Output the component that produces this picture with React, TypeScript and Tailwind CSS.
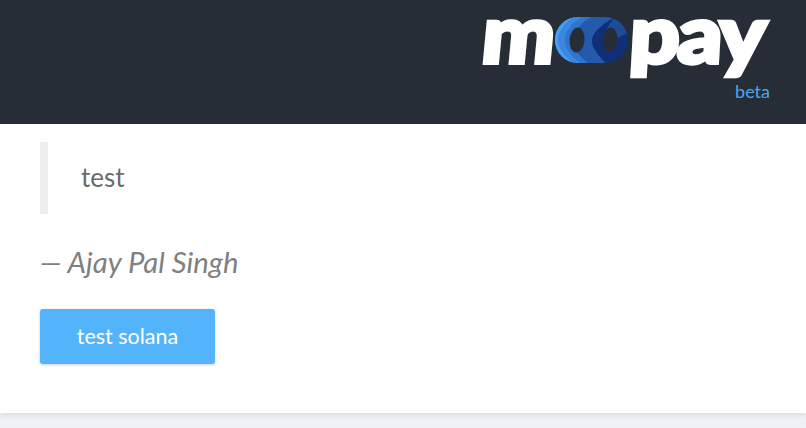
const bodyFont = { fontFamily: '"Lato", "Noto Sans", sans-serif' };

function LogoMark() {
  return (
    <svg width="73" height="46" viewBox="0 0 73 46" className="mt-4 block shrink-0">
      <defs>
        <clipPath id="pill">
          <rect x="0" y="0" width="73" height="46" rx="23" />
        </clipPath>
      </defs>
      <g clipPath="url(#pill)">
        <rect width="73" height="46" fill="#0f2f78" />
        <path d="M0 0H73V16C64 20 56 24 50 30C44 22 52 10 60 0Z" fill="#1d4c9c" />
        <path d="M0 0H60C50 6 37 14 37 24C37 32 44 38 50 46H0Z" fill="#2459ac" />
        <path d="M0 0H36C26 6 18 14 18 23C18 32 26 40 33 46H0Z" fill="#2f74cd" />
        <path d="M0 0H27C17 6 10 14 10 23C10 32 17 40 26 46H0Z" fill="#3a86e0" />
        <path d="M0 0H19C10 6 3 14 3 23C3 32 10 40 19 46H0Z" fill="#479ef2" />
      </g>
      <ellipse cx="22" cy="23" rx="7.5" ry="12.5" fill="#262d37" transform="rotate(5 22 23)" />
      <ellipse cx="55" cy="23" rx="7.5" ry="12.5" fill="#262d37" transform="rotate(5 55 23)" />
    </svg>
  );
}

export default function App() {
  return (
    <div className="min-h-[428px] overflow-hidden bg-[#f0f1f5]" style={bodyFont}>
      <header className="relative flex h-[124px] justify-end bg-[#262d37] pr-[36px]">
        <div className="flex items-start pt-px">
          <span className="w-[72px] origin-left scale-x-[1.08] -skew-x-[5deg] text-[80px] leading-[62px] font-black text-white [-webkit-text-stroke:4px_white]">
            m
          </span>
          <LogoMark />
          <span className="ml-[2px] w-[140px] origin-left scale-x-[1.1] -skew-x-[3deg] text-[80px] leading-[62px] font-black tracking-[-2px] text-white [-webkit-text-stroke:4px_white]">
            pay
          </span>
        </div>
        <span className="absolute right-[36px] top-[81px] text-[18px] leading-5 text-[#4aa8ec]">beta</span>
      </header>
      <main className="h-[289px] bg-white px-10 pt-[18px] shadow-[0_1px_6px_rgba(0,0,0,0.12)]">
        <blockquote className="flex h-[72px] items-center border-l-[8px] border-[#eeeeee] pb-[2px] pl-[33px] text-[26px] text-[#6b6b6b]">
          test
        </blockquote>
        <p className="mt-[30px] text-[29.3px] leading-[36px] text-[#808080] italic">— Ajay Pal Singh</p>
        <button className="mt-[29px] flex h-[55px] w-[175px] items-center justify-center rounded-[3px] bg-[#54b4fb] text-[21.5px] text-white shadow-[0_1px_3px_rgba(0,0,0,0.2)]">
          test solana
        </button>
      </main>
    </div>
  );
}
